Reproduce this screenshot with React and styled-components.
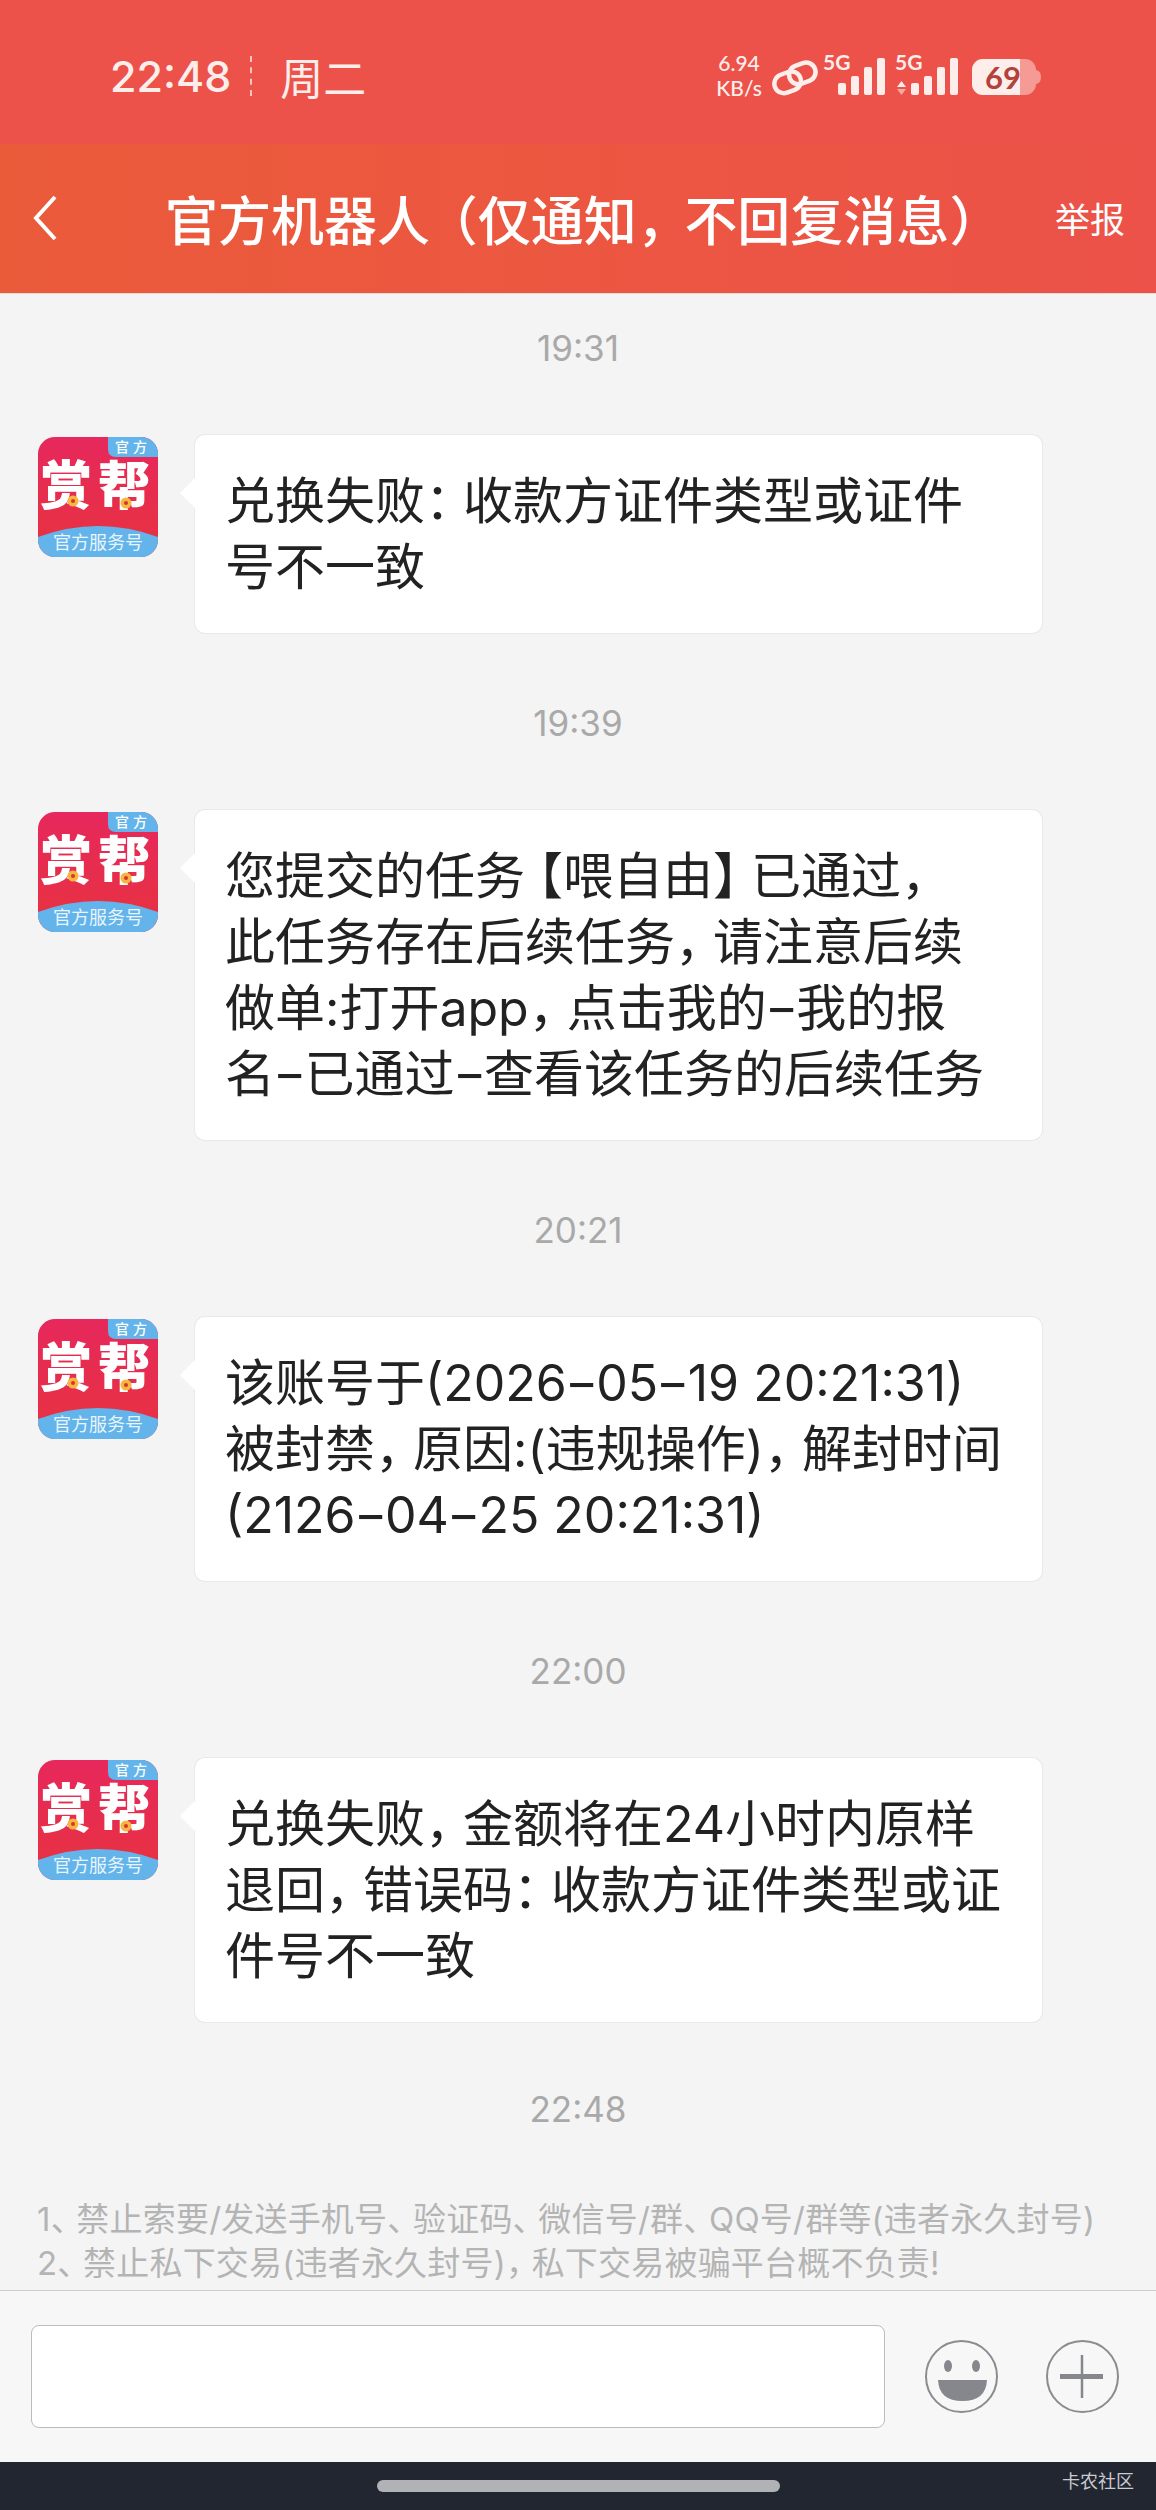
import React from 'react';
import styled, { createGlobalStyle } from 'styled-components';

const font = `Inter, "Noto Sans CJK SC", "Noto Sans", sans-serif`;
const cjkOnly = `"Noto Sans CJK SC", "Noto Sans", sans-serif`;

const GlobalStyle = createGlobalStyle`
  html, body {
    margin: 0;
    padding: 0;
    background: #f4f4f4;
  }
  * {
    box-sizing: border-box;
  }
`;

const Page = styled.div`
  width: 1156px;
  height: 2510px;
  display: flex;
  flex-direction: column;
  overflow: hidden;
  font-family: ${font};
  background: #f4f4f4;
`;

const StatusBar = styled.div`
  height: 144px;
  flex: none;
  background: #ec5249;
  color: #fdeeec;
  display: flex;
  align-items: center;
  justify-content: space-between;
  padding: 6px 114px 0 110px;
`;

const Clock = styled.div`
  display: flex;
  align-items: center;
  margin-top: 2px;
  font-size: 43px;
  font-weight: 500;
`;

const Divider = styled.span`
  width: 0;
  height: 40px;
  margin: 0 28px 0 19px;
  border-left: 2px dashed #f9c4bf;
`;

const Week = styled.span`
  font-family: ${cjkOnly};
  font-size: 43px;
  font-weight: 400;
`;

const StatusRight = styled.div`
  display: flex;
  align-items: center;
  gap: 10px;
`;

const Speed = styled.div`
  width: 46px;
  font-family: "Lato", sans-serif;
  font-size: 21px;
  font-weight: 500;
  line-height: 25px;
  text-align: center;
  white-space: nowrap;
`;

const NavBar = styled.div`
  height: 150px;
  flex: none;
  display: flex;
  align-items: center;
  padding-bottom: 2px;
  background: linear-gradient(90deg, #ea5b3a 0%, #ec5740 45%, #ec5249 100%);
  color: #fff;
  border-bottom: 1px solid #e4dcdb;
`;

const Back = styled.svg`
  width: 24px;
  height: 46px;
  margin-left: 33px;
  flex: none;
`;

const Title = styled.div`
  flex: 1;
  margin-left: 108px;
  font-family: ${cjkOnly};
  font-size: 53px;
  font-weight: 500;
  white-space: nowrap;
`;

const Report = styled.div`
  margin-right: 31px;
  font-family: ${cjkOnly};
  font-size: 35px;
  white-space: nowrap;
`;

const ChatList = styled.div`
  flex: 1;
  min-height: 0;
  overflow: hidden;
  display: flex;
  flex-direction: column;
`;

const TimeLabel = styled.div`
  text-align: center;
  color: #a9a9a9;
  font-size: 35px;
  line-height: 44px;
  margin-top: ${(p) => p.$top}px;
`;

const MessageRow = styled.div`
  display: flex;
  align-items: flex-start;
  margin-top: ${(p) => p.$top}px;
  padding-left: 38px;
`;

const Avatar = styled.svg`
  width: 120px;
  height: 120px;
  flex: none;
  margin-top: 2px;
`;

const Bubble = styled.div`
  position: relative;
  width: 847px;
  margin-left: 37px;
  padding: 33px 10px 33px 30px;
  background: #fff;
  border-radius: 10px;
  box-shadow: 0 0 0 1px #e9e9e9;
  color: #222;
  font-size: 50px;
  line-height: 66px;
  &::before {
    content: '';
    position: absolute;
    left: -15px;
    top: 42px;
    width: 16px;
    height: 32px;
    background: #fff;
    clip-path: polygon(0 50%, 100% 0, 100% 100%);
  }
`;

const BubbleLine = styled.div`
  position: relative;
  white-space: nowrap;
`;

const Punct = styled.span`
  display: inline-block;
  width: ${(p) => p.$w}em;
  text-indent: ${(p) => (p.$open ? p.$w - 1 : 0)}em;
  white-space: nowrap;
`;

const Hyphen = styled.span`
  display: inline-block;
  width: 0.59em;
  text-align: center;
  transform: scaleX(1.45);
`;

const Notice = styled.div`
  margin-top: 66px;
  padding-left: 37px;
  color: #b4b4b4;
  font-size: 33px;
  line-height: 44px;
  letter-spacing: 0.2px;
  white-space: nowrap;
`;

const Composer = styled.div`
  height: 172px;
  flex: none;
  display: flex;
  align-items: center;
  padding-left: 31px;
  background: #f7f7f7;
  border-top: 1px solid #cfcfcf;
`;

const Input = styled.div`
  width: 854px;
  height: 103px;
  background: #fff;
  border: 1px solid #bcbcbc;
  border-radius: 8px;
`;

const ComposerIcon = styled.svg`
  width: 73px;
  height: 73px;
  flex: none;
  margin-left: ${(p) => p.$left}px;
`;

const BottomBar = styled.div`
  height: 48px;
  flex: none;
  position: relative;
  background: #212631;
  display: flex;
  justify-content: center;
  padding-top: 18px;
`;

const HomePill = styled.div`
  width: 403px;
  height: 12px;
  border-radius: 6px;
  background: #b0b2b6;
`;

const Watermark = styled.div`
  position: absolute;
  right: 22px;
  top: 6px;
  color: #c9cbd0;
  font-family: ${cjkOnly};
  font-size: 18px;
  line-height: 24px;
`;

// the phone's font sets CJK punctuation narrower than a full em, and its hyphen longer
function Rich({ text, w = 0.76 }) {
  return text.split(/([，：、（）【】-])/).map((part, i) => {
    if (part === '-') return <Hyphen key={i}>-</Hyphen>;
    if (!/^[，：、（）【】]$/.test(part)) return part;
    return (
      <Punct key={i} $w={w} $open={part === '（' || part === '【'}>
        {part}
      </Punct>
    );
  });
}

function AppLogo({ id }) {
  return (
    <Avatar viewBox="0 0 120 120">
      <defs>
        <clipPath id={`clip${id}`}>
          <rect width="120" height="120" rx="17" />
        </clipPath>
        <linearGradient id={`red${id}`} x1="0" y1="0" x2="0" y2="1">
          <stop offset="0" stopColor="#e6285c" />
          <stop offset="1" stopColor="#e8323f" />
        </linearGradient>
      </defs>
      <g clipPath={`url(#clip${id})`}>
        <rect width="120" height="120" fill={`url(#red${id})`} />
        <path d="M0 100 Q60 78 120 100 V120 H0 Z" fill="#63b4ea" />
        <path d="M70 0 H120 V20 H78 Q70 20 70 12 Z" fill="#63b4ea" />
        <text x="95" y="15" textAnchor="middle" fontSize="14" fontWeight="500" fill="#fff" letterSpacing="4" fontFamily={cjkOnly}>官方</text>
        <text x="60" y="68" textAnchor="middle" fontSize="52" fontWeight="900" fill="#fff" letterSpacing="6" fontFamily={cjkOnly}>赏帮</text>
        <text x="60" y="112" textAnchor="middle" fontSize="18" fill="#e9f5fc" fontFamily={cjkOnly}>官方服务号</text>
        <circle cx="35" cy="64" r="5.5" fill="#f6b63f" />
        <circle cx="35" cy="64" r="2" fill="#d8342f" />
        <circle cx="88" cy="66" r="5.5" fill="#f6b63f" />
        <circle cx="88" cy="66" r="2" fill="#d8342f" />
      </g>
    </Avatar>
  );
}

const bars = [
  [66, 12],
  [79, 19],
  [92, 28],
  [105, 37],
];

function SignalBars({ x }) {
  return bars.map(([bx, h]) => (
    <rect key={bx} x={x + bx} y={95 - h} width="8" height={h} rx="2" fill="#fdeeec" />
  ));
}

// viewBox uses the screenshot's own coordinates for this strip
function StatusIcons() {
  return (
    <svg width="270" height="50" viewBox="772 50 270 50">
      <g fill="none" stroke="#fdeeec" strokeWidth="4.5">
        <rect x="774" y="73" width="27" height="19" rx="9.5" transform="rotate(-20 787 82)" />
        <rect x="789" y="64" width="27" height="19" rx="9.5" transform="rotate(-20 802 74)" />
      </g>
      <text x="823" y="70" fontSize="21" fontWeight="700" fill="#fdeeec" fontFamily="Lato, sans-serif">5G</text>
      <SignalBars x={772} />
      <text x="895" y="70" fontSize="21" fontWeight="700" fill="#fdeeec" fontFamily="Lato, sans-serif">5G</text>
      <path d="M897 87 l4.5 -6 l4.5 6 Z" fill="#fdeeec" />
      <path d="M897 89 l4.5 6 l4.5 -6 Z" fill="#f7a7a1" />
      <SignalBars x={845} />
      <rect x="972" y="59" width="64" height="36" rx="11" fill="#f59a94" />
      <path d="M983 59 H1020 V95 H983 A11 11 0 0 1 972 84 V70 A11 11 0 0 1 983 59 Z" fill="#fdeeec" />
      <path d="M1036 70 q5 1 5 7 q0 6 -5 7 Z" fill="#f59a94" />
      <text x="1003" y="89" textAnchor="middle" fontSize="31" fontWeight="700" fill="#b3423a" fontFamily="Lato, sans-serif">69</text>
    </svg>
  );
}

const messages = [
  { time: '19:31', timeTop: 32, lines: ['兑换失败：收款方证件类型或证件', '号不一致'] },
  { time: '19:39', timeTop: 68, lines: ['您提交的任务【喂自由】已通过，', '此任务存在后续任务，请注意后续', '做单:打开app，点击我的-我的报', '名-已通过-查看该任务的后续任务'] },
  { time: '20:21', timeTop: 68, lines: ['该账号于(2026-05-19 20:21:31)', '被封禁，原因:(违规操作)，解封时间', '(2126-04-25 20:21:31)'] },
  { time: '22:00', timeTop: 68, lines: ['兑换失败，金额将在24小时内原样', '退回，错误码：收款方证件类型或证', '件号不一致'] },
];

export default function App() {
  return (
    <Page>
      <GlobalStyle />
      <StatusBar>
        <Clock>
          22:48
          <Divider />
          <Week>周二</Week>
        </Clock>
        <StatusRight>
          <Speed>6.94<br />KB/s</Speed>
          <StatusIcons />
        </StatusRight>
      </StatusBar>
      <NavBar>
        <Back viewBox="0 0 24 46">
          <path d="M22 2 L3 23 L22 44" fill="none" stroke="#fff" strokeWidth="4" />
        </Back>
        <Title><Rich text="官方机器人（仅通知，不回复消息）" w={0.9} /></Title>
        <Report>举报</Report>
      </NavBar>
      <ChatList>
        {messages.map((m) => (
          <React.Fragment key={m.time}>
            <TimeLabel $top={m.timeTop}>{m.time}</TimeLabel>
            <MessageRow $top={65}>
              <AppLogo id={m.time.replace(':', '')} />
              <Bubble>
                {m.lines.map((line) => (
                  <BubbleLine key={line}><Rich text={line} /></BubbleLine>
                ))}
              </Bubble>
            </MessageRow>
          </React.Fragment>
        ))}
        <TimeLabel $top={65}>22:48</TimeLabel>
        <Notice>
          <div><Rich text="1、禁止索要/发送手机号、验证码、微信号/群、QQ号/群等(违者永久封号)" w={0.78} /></div>
          <div><Rich text="2、禁止私下交易(违者永久封号)，私下交易被骗平台概不负责!" w={0.78} /></div>
        </Notice>
      </ChatList>
      <Composer>
        <Input />
        <ComposerIcon $left={40} viewBox="0 0 73 73">
          <circle cx="36.5" cy="36.5" r="35.5" fill="none" stroke="#8a8c90" strokeWidth="2" />
          <ellipse cx="23" cy="26" rx="4" ry="6" fill="#85878c" />
          <ellipse cx="51" cy="26" rx="4" ry="6" fill="#85878c" />
          <path d="M13 40 H62 Q61 61 37.5 61 Q14 61 13 40 Z" fill="#85878c" />
        </ComposerIcon>
        <ComposerIcon $left={48} viewBox="0 0 73 73">
          <circle cx="36.5" cy="36.5" r="35.5" fill="none" stroke="#8a8c90" strokeWidth="2" />
          <path d="M36 15 V58" stroke="#85878c" strokeWidth="2.5" />
          <path d="M14 36.5 H57" stroke="#85878c" strokeWidth="5" />
        </ComposerIcon>
      </Composer>
      <BottomBar>
        <HomePill />
        <Watermark>卡农社区</Watermark>
      </BottomBar>
    </Page>
  );
}
